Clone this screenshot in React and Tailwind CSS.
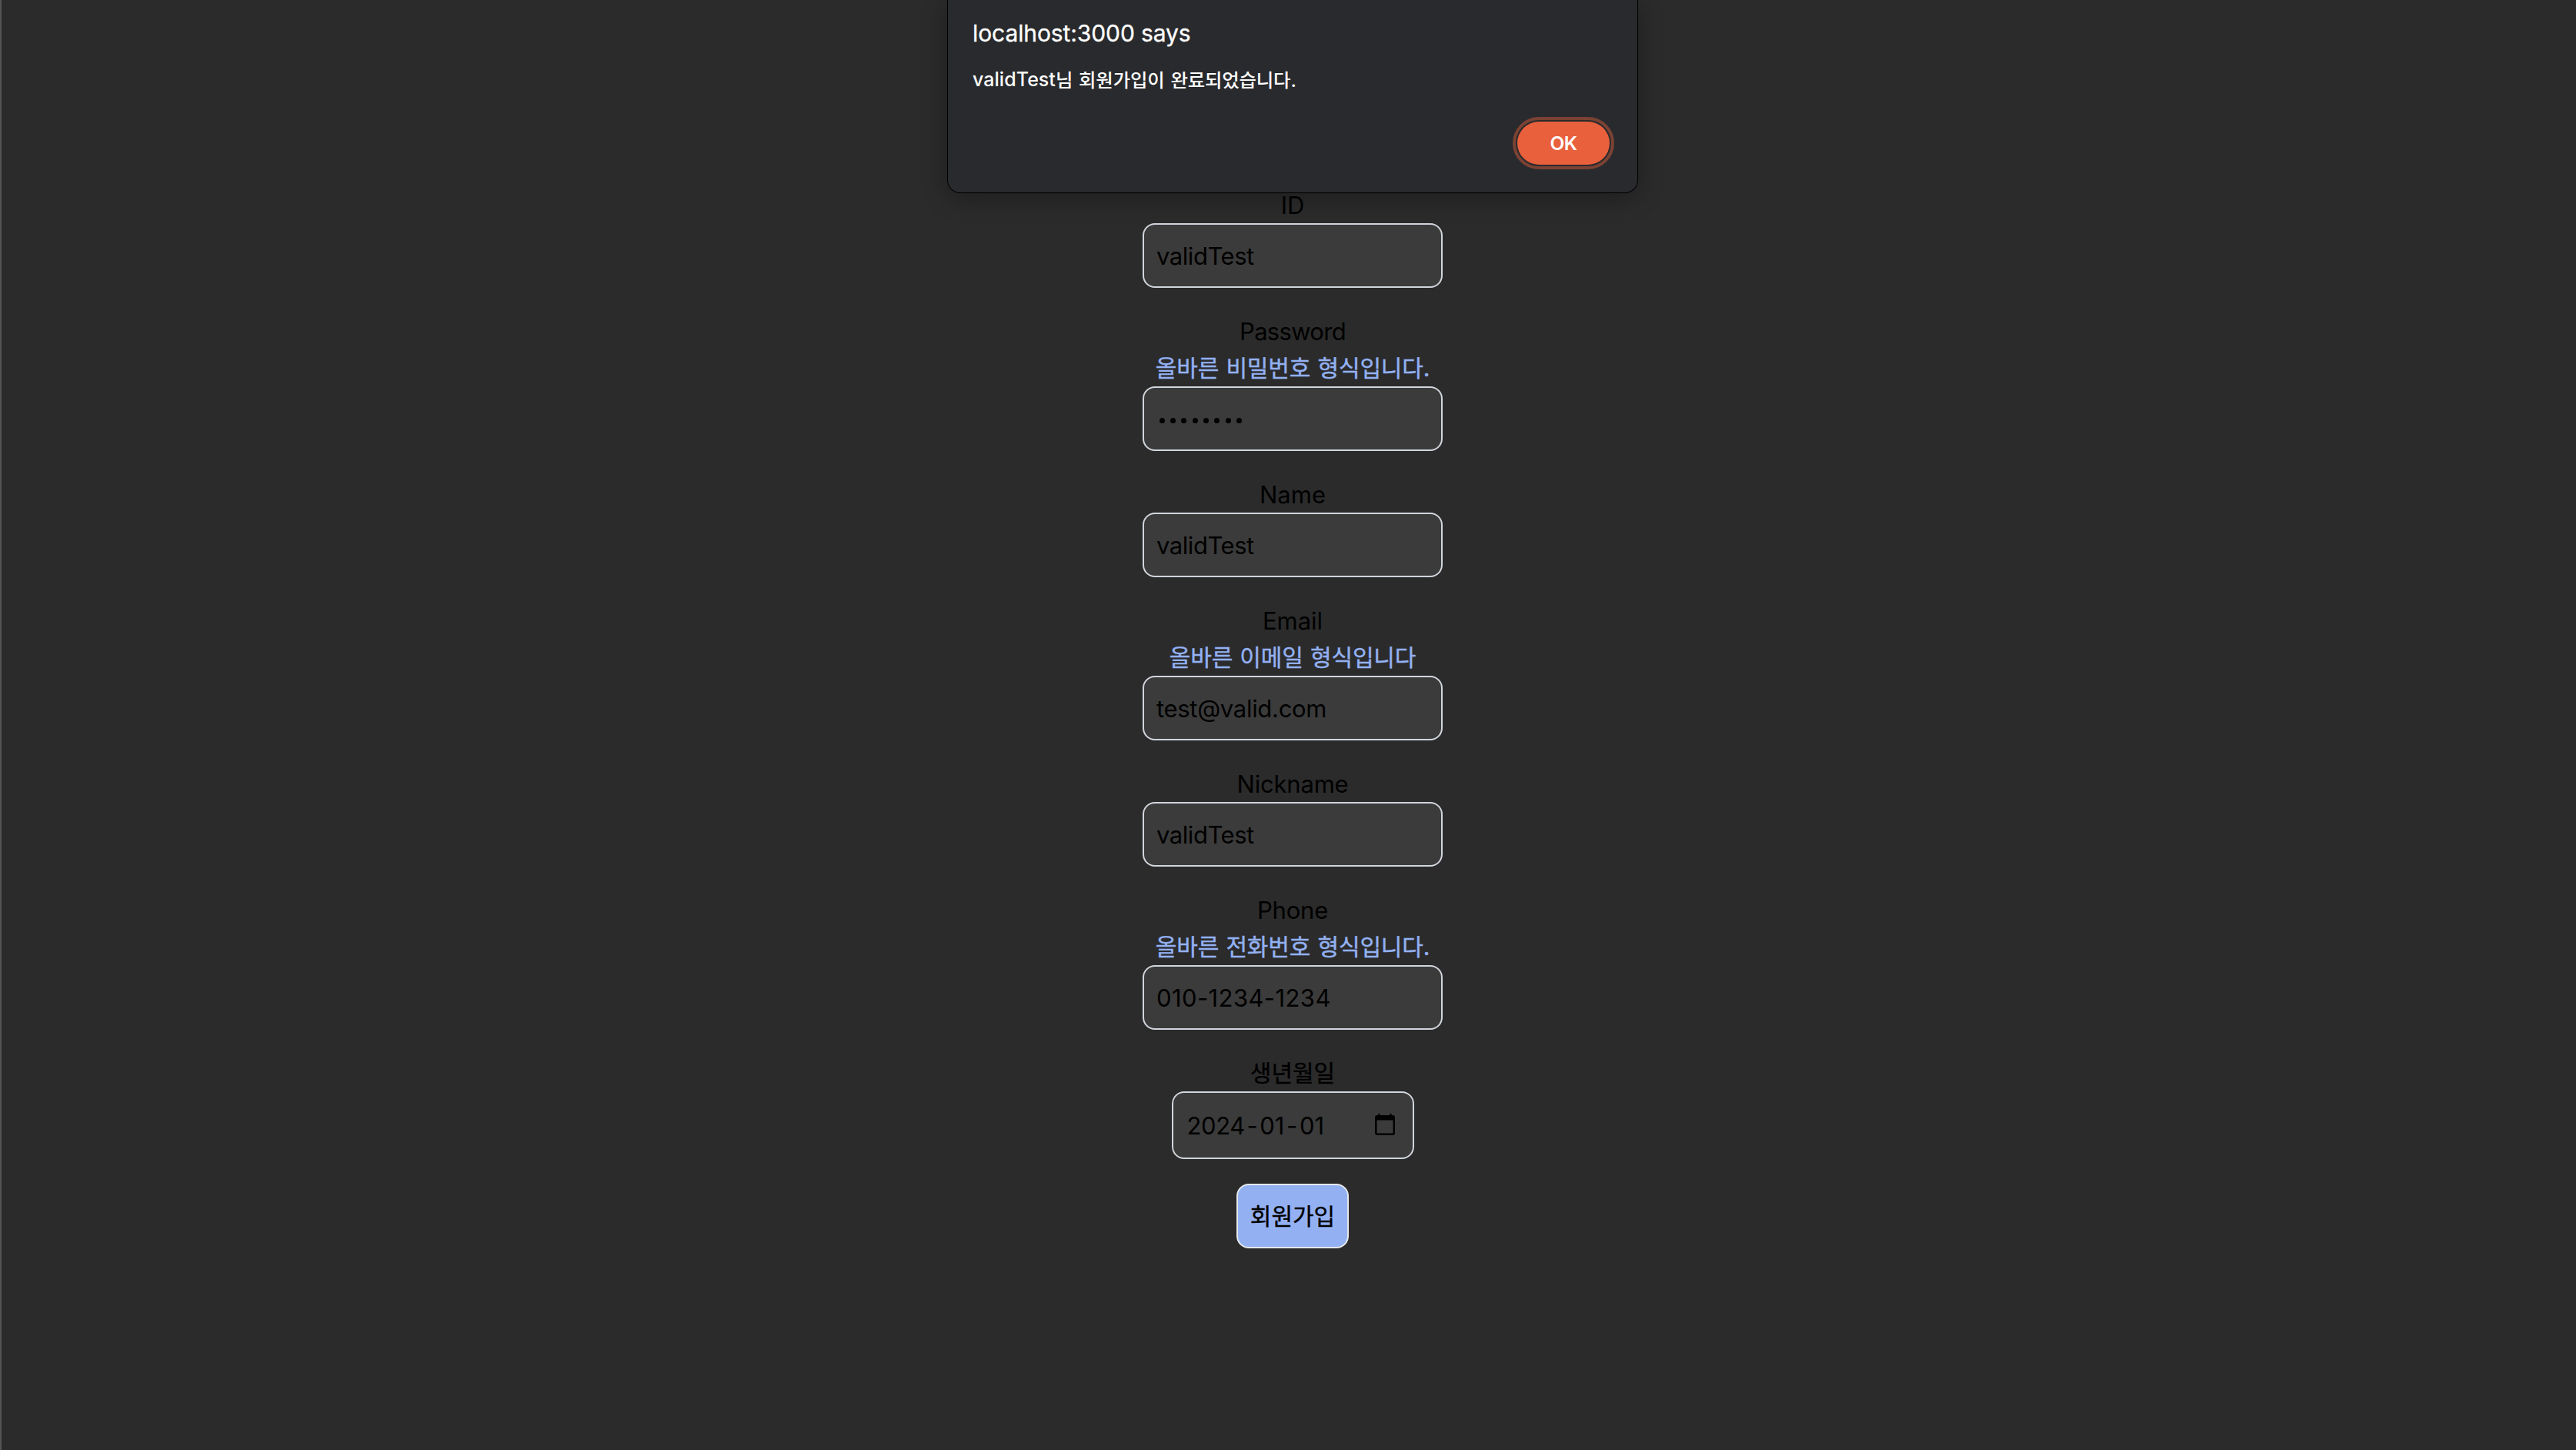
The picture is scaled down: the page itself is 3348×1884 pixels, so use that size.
function Label({ children, className = "" }) {
  return <div className={"flex h-12 items-center pt-[3px] text-[31px] " + className}>{children}</div>;
}

function Hint({ children }) {
  return (
    <div className="flex h-12 items-center whitespace-nowrap text-[30px] tracking-[-0.15px] text-[#93b1f2] [-webkit-text-stroke:0.4px] [word-spacing:1px]">
      {children}
    </div>
  );
}

function Input({ children, className = "" }) {
  return (
    <div className={"flex h-[84px] w-[390px] items-center whitespace-nowrap rounded-2xl border-2 border-gray-300 bg-[#3b3b3b] px-4 pt-0.5 text-[31px] " + className}>
      {children}
    </div>
  );
}

function CalendarIcon() {
  return (
    <svg className="-mt-1" width="26" height="28" viewBox="0 0 26 28" fill="none" aria-hidden="true">
      <rect x="1.25" y="3.25" width="23.5" height="23.5" rx="1.8" stroke="black" strokeWidth="2.5" />
      <path d="M1 3h24v5.6H1zM4 0h2.4v4H4zM19.2 0h2.4v4h-2.4z" fill="black" />
    </svg>
  );
}

function Dialog() {
  return (
    <div className="absolute left-[1230px] top-0 h-[250px] w-[896px] rounded-b-2xl bg-[#292a2d] px-8 text-white shadow-[0_0_0_1px_#000,0_6px_32px_rgba(0,0,0,0.35)]">
      <div className="flex h-[86px] items-center text-[30px] tracking-[-0.1px] [-webkit-text-stroke:0.3px]">localhost:3000 says</div>
      <div className="flex h-9 items-center whitespace-pre text-[25px] font-medium">
        <span className="tracking-[0.05px]">validTest</span>
        <span className="text-[24.4px] tracking-[-0.15px] [word-spacing:1.5px]">님 회원가입이 완료되었습니다.</span>
      </div>
      <div className="mt-9 flex justify-end pr-1">
        <button className="h-14 w-[120px] rounded-full bg-[#e8603c] text-[24.5px] font-semibold tracking-[-0.5px] outline-4 outline-offset-2 outline-[#7b4234]">
          OK
        </button>
      </div>
    </div>
  );
}

export default function App() {
  return (
    <div className="relative h-[1884px] w-[3348px] overflow-hidden border-l-2 border-[#555555] bg-[#2b2b2b] font-['Inter','Noto_Sans_CJK_KR',sans-serif] text-black">
      <div className="ml-[1278px] flex w-[800px] flex-col items-center gap-8 pt-[242px]">
        <div className="flex flex-col items-center">
          <Label>ID</Label>
          <Input className="tracking-[-0.45px]">validTest</Input>
        </div>
        <div className="flex flex-col items-center">
          <Label className="tracking-[-0.7px]">Password</Label>
          <Hint>올바른 비밀번호 형식입니다.</Hint>
          <Input>
            <div className="ml-[3.5px] flex gap-[7.4px]">
              {Array.from({ length: 8 }, (_, i) => (
                <span key={i} className="mt-[3px] size-[7px] rounded-full bg-black" />
              ))}
            </div>
          </Input>
        </div>
        <div className="flex flex-col items-center">
          <Label>Name</Label>
          <Input className="tracking-[-0.45px]">validTest</Input>
        </div>
        <div className="flex flex-col items-center">
          <Label>Email</Label>
          <Hint>올바른 이메일 형식입니다</Hint>
          <Input className="tracking-[-0.3px]">test@valid.com</Input>
        </div>
        <div className="flex flex-col items-center">
          <Label className="tracking-[-0.2px]">Nickname</Label>
          <Input className="tracking-[-0.45px]">validTest</Input>
        </div>
        <div className="flex flex-col items-center">
          <Label className="tracking-[-0.2px]">Phone</Label>
          <Hint>올바른 전화번호 형식입니다.</Hint>
          <Input className="tracking-[0.4px]">010-1234-1234</Input>
        </div>
        <div className="flex flex-col items-center">
          <div className="flex h-12 items-center text-[30px] [-webkit-text-stroke:0.4px]">생년월일</div>
          <div className="flex h-[88px] w-[315px] items-center justify-between rounded-2xl border-2 border-gray-300 bg-[#3b3b3b] pl-[18px] pr-[23px] pt-0.5 text-[31px]">
            <div className="flex gap-[2.6px]">
              <span className="tracking-[-0.4px]">2024</span>
              <span>-</span>
              <span>01</span>
              <span>-</span>
              <span>01</span>
            </div>
            <CalendarIcon />
          </div>
        </div>
        <button className="h-[84px] w-[146px] rounded-2xl border-2 border-gray-200 bg-[#93b1f2] text-[30px] [-webkit-text-stroke:0.4px]">
          회원가입
        </button>
      </div>
      <Dialog />
    </div>
  );
}
